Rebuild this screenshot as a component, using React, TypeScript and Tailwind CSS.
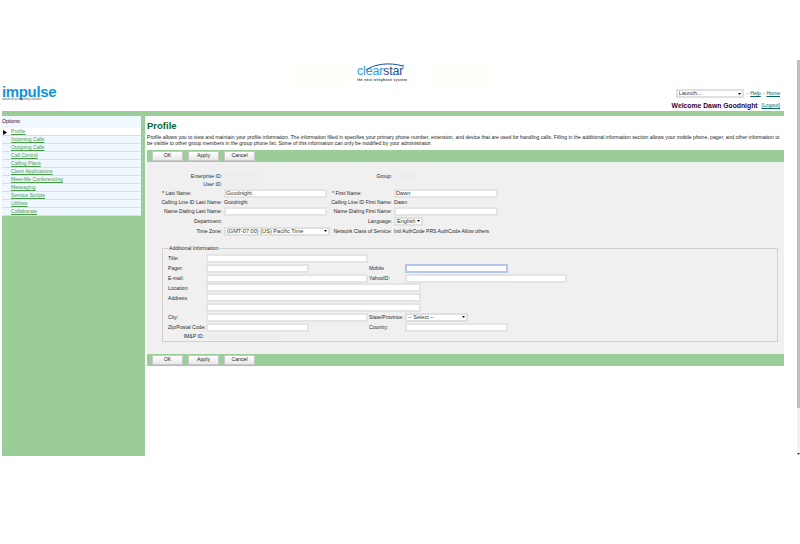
import React from 'react';

const navItems = [
  'Profile',
  'Incoming Calls',
  'Outgoing Calls',
  'Call Control',
  'Calling Plans',
  'Client Applications',
  'Meet-Me Conferencing',
  'Messaging',
  'Service Scripts',
  'Utilities',
  'Collaborate',
];

const Toolbar = () => (
  <div className="flex h-[12px] items-center gap-[5px] bg-[#9bcd98] pl-[5px]">
    {['OK', 'Apply', 'Cancel'].map(label => (
      <button
        key={label}
        className="h-[10px] w-[31px] border border-[#c8c8c8] bg-gradient-to-b from-white to-[#e8e8e8] text-[5.2px] leading-none text-[#222]"
      >
        {label}
      </button>
    ))}
  </div>
);

const Label = ({ children, left }: { children: React.ReactNode; left?: boolean }) => (
  <div className={`flex items-center pr-[2px] pt-[1px] whitespace-nowrap ${left ? '' : 'justify-end'}`}>{children}</div>
);

const Field = ({ w, value, focus }: { w: string; value?: string; focus?: boolean }) => (
  <div className="flex items-center">
    <input
      readOnly
      value={value ?? ''}
      className={`block h-[9px] border-2 bg-white px-0 text-[5.6px] leading-none text-[#333] outline-none ${w} ${
        focus ? 'border-[#b4c6ea]' : 'border-[#e4e4e4]'
      }`}
    />
  </div>
);

const Select = ({ w, h, value }: { w: string; h: string; value: string }) => (
  <div className={`relative ${w} ${h}`}>
    <select className="block h-full w-full appearance-none border-2 border-[#e0e0e0] bg-white pl-[1px] text-[5.6px] leading-none text-[#333] outline-none">
      <option>{value}</option>
    </select>
    <svg className="pointer-events-none absolute right-[3px] top-1/2 -translate-y-1/2" width="3" height="2" viewBox="0 0 3 2">
      <path d="M0 0 H3 L1.5 2z" fill="#111" />
    </svg>
  </div>
);

const Blank = ({ w }: { w: string }) => (
  <div className="flex items-center">
    <div className={`h-[7px] bg-[#eeeeee] ${w}`} />
  </div>
);

export default function App() {
  return (
    <div className="flex h-[544px] w-[800px] overflow-hidden bg-white font-['Liberation_Sans',Arial,sans-serif] text-[5.1px] text-[#2a2a2a]">
      <div className="w-[797px] shrink-0">
        {/* Banner */}
        <div className="h-[111px]">
          <div className="flex h-[86px] items-start pl-[295px] pt-[62px]">
            <div className="h-[23px] w-[55px] bg-[#fffffa]" />
            <div className="relative ml-[7px] w-[56px] pt-[4px]">
              <svg className="absolute left-0 top-0" width="56" height="12" viewBox="0 0 56 12" fill="none">
                <path d="M9 8 C18 2 32 0 46 4" stroke="#1b4f9c" strokeWidth="1" />
                <path d="M46 2 l.6 1.4 1.4.6 -1.4.6 -.6 1.4 -.6-1.4 -1.4-.6 1.4-.6z" fill="#2a9fd8" />
              </svg>
              <div className="text-[12.5px] leading-[11px] tracking-[-0.2px]">
                <span className="text-[#2a9fd8]">clear</span>
                <span className="text-[#1b4f9c]">star</span>
              </div>
              <div className="mt-[1px] text-[3.4px] leading-[4px] font-bold tracking-[0.3px] text-[#444]">
                the next telephone system
              </div>
            </div>
            <div className="ml-[16px] h-[23px] w-[62px] bg-[#fffffa]" />
          </div>
          <div className="flex h-[25px] items-start justify-between pl-[2px] pr-[17px]">
            <div>
              <div className="text-[15px] leading-[12px] font-bold tracking-[-0.35px] text-[#1593d8]">impulse</div>
              <div className="text-[2.8px] leading-[3px] text-[#555]">advanced ip telephony solutions</div>
            </div>
            <div className="flex flex-col items-end pt-[3px]">
              <div className="flex items-center gap-[2px] text-[#006666]">
                <Select w="w-[68px] mr-[1px]" h="h-[9px]" value="Launch..." />
                <span>-</span>
                <a className="underline">Help</a>
                <span>-</span>
                <a className="underline">Home</a>
              </div>
              <div className="mt-[3px] flex items-center gap-[4px]">
                <span className="text-[6.8px] leading-[9px] font-bold text-[#330033]">Welcome Dawn Goodnight</span>
                <a className="text-[#006666] underline">[Logout]</a>
              </div>
            </div>
          </div>
        </div>

        <div className="ml-[2px] h-[5px] w-[782px] bg-[#9bcd98]" />

        <div className="ml-[2px] flex w-[782px] items-start">
          {/* Sidebar */}
          <div className="h-[340px] w-[143px] shrink-0 bg-[#9bcd98] pr-[4px]">
            <div className="flex h-[12px] items-center bg-[#f0f8ff] text-[#330033]">Options:</div>
            {navItems.map((item, i) => (
              <div
                key={item}
                className={`flex h-[8px] items-center border-b border-[#cfe6d0] pt-[1px] ${i === 0 ? 'bg-white' : 'bg-[#f0f8ff]'}`}
              >
                <span className="flex w-[9px] justify-start pl-[1px]">
                  {i === 0 && (
                    <svg width="4" height="5" viewBox="0 0 4 5">
                      <path d="M0 0 L4 2.5 L0 5z" fill="#000" />
                    </svg>
                  )}
                </span>
                <a className="text-[#4a9a4a] underline">{item}</a>
              </div>
            ))}
          </div>

          {/* Main */}
          <div className="ml-[2px] w-[637px]">
            <div className="h-[34px] bg-white">
              <h1 className="pt-[4px] text-[9.5px] leading-[11px] font-bold text-[#006633]">Profile</h1>
              <p className="mt-[3px] text-[5.1px] leading-[6px] whitespace-nowrap text-[#222]">
                Profile allows you to view and maintain your profile information. The information filled in specifies your primary phone number, extension, and device that are used for handling calls. Filling in the additional information section allows your mobile phone, pager, and other information to
                <br />
                be visible to other group members in the group phone list. Some of this information can only be modified by your administrator.
              </p>
            </div>
            <Toolbar />

            <div className="h-[192px] bg-[#f0f0f0] pl-[15px] pr-[6px] pt-[10px]">
              <div className="grid grid-cols-[62px_108px_62px_1fr] grid-rows-[8px_8px_10px_8px_10px_10px_10px]">
                <Label>Enterprise ID:</Label>
                <Blank w="w-[38px]" />
                <Label>Group:</Label>
                <Blank w="w-[22px]" />

                <Label>User ID:</Label>
                <Blank w="w-[38px]" />
                <div />
                <div />

                <Label left>* Last Name:</Label>
                <Field w="w-[103px]" value="Goodnight" />
                <Label left>* First Name:</Label>
                <Field w="w-[104px]" value="Dawn" />

                <Label>Calling Line ID Last Name:</Label>
                <div className="flex items-center pt-[1px]">Goodnight</div>
                <Label>Calling Line ID First Name:</Label>
                <div className="flex items-center pt-[1px]">Dawn</div>

                <Label>Name Dialing Last Name:</Label>
                <Field w="w-[103px]" />
                <Label>Name Dialing First Name:</Label>
                <Field w="w-[104px]" />

                <Label>Department:</Label>
                <div />
                <Label>Language:</Label>
                <div className="flex items-center">
                  <Select w="w-[29px]" h="h-[9px]" value="English" />
                </div>

                <Label>Time Zone:</Label>
                <div className="flex items-center">
                  <Select w="w-[106px]" h="h-[9px]" value="(GMT-07:00) (US) Pacific Time" />
                </div>
                <Label>Network Class of Service:</Label>
                <div className="flex items-center pt-[1px]">Intl AuthCode PRS AuthCode Allow others</div>
              </div>

              <fieldset className="mt-[9px] h-[97px] border border-[#d0d0d0] pl-[5px] pt-[2px]">
                <legend className="px-[1px] leading-[6px]">Additional Information</legend>
                <div className="grid grid-cols-[38px_163px_36px_1fr] grid-rows-[10px_10px_10px_10px_10px_9px_10px_10px_8px]">
                  <Label left>Title:</Label>
                  <Field w="w-[162px]" />
                  <div />
                  <div />

                  <Label left>Pager:</Label>
                  <Field w="w-[103px]" />
                  <Label left>Mobile</Label>
                  <Field w="w-[103px]" focus />

                  <Label left>E-mail:</Label>
                  <Field w="w-[162px]" />
                  <Label left>YahooID:</Label>
                  <Field w="w-[162px]" />

                  <Label left>Location:</Label>
                  <div className="col-span-3">
                    <Field w="w-[215px]" />
                  </div>

                  <Label left>Address:</Label>
                  <div className="col-span-3">
                    <Field w="w-[215px]" />
                  </div>

                  <div />
                  <div className="col-span-3">
                    <Field w="w-[215px]" />
                  </div>

                  <Label left>City:</Label>
                  <Field w="w-[162px]" />
                  <Label left>State/Province:</Label>
                  <div className="flex items-center">
                    <Select w="w-[63px]" h="h-[9px]" value="-- Select --" />
                  </div>

                  <Label left>Zip/Postal Code:</Label>
                  <Field w="w-[103px]" />
                  <Label left>Country:</Label>
                  <Field w="w-[103px]" />

                  <Label>IM&amp;P ID:</Label>
                  <Blank w="w-[78px]" />
                  <div />
                  <div />
                </div>
              </fieldset>
            </div>
            <Toolbar />
          </div>
        </div>
      </div>

      {/* Scrollbar */}
      <div className="mt-[60px] w-[3px]">
        <div className="h-[348px] bg-[#bfbfbf]" />
        <div className="flex h-[47px] items-end justify-center bg-[#f1f1f1]">
          <svg width="3" height="2" viewBox="0 0 3 2">
            <path d="M0 0 H3 L1.5 2z" fill="#444" />
          </svg>
        </div>
      </div>
    </div>
  );
}
